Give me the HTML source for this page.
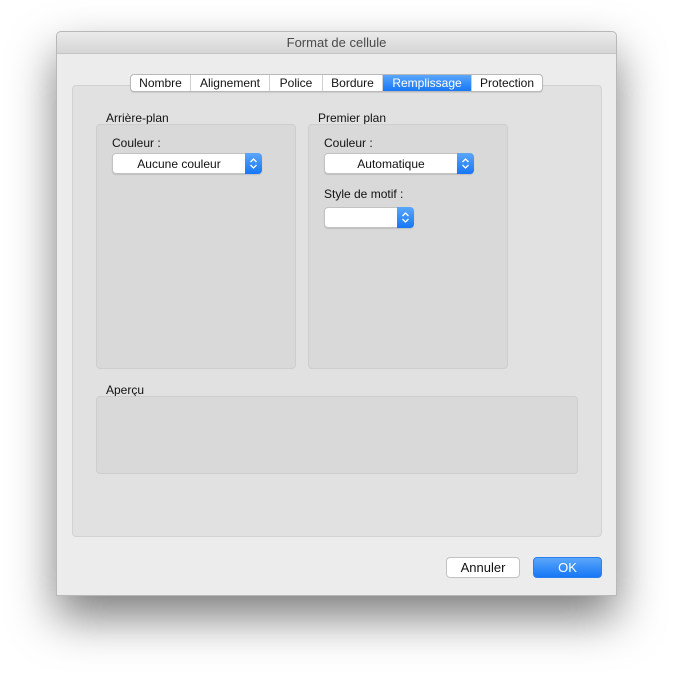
<!DOCTYPE html>
<html><head><style>
*{box-sizing:border-box;margin:0;padding:0}
body{width:673px;height:676px;background:#fff;font-family:"Liberation Sans",sans-serif;font-size:12px;color:#111;position:relative;overflow:hidden}
.abs{position:absolute}
.win{left:56px;top:31px;width:561px;height:565px;background:#ececec;border:1px solid #b8b8b8;border-radius:5px 5px 0 0;box-shadow:0 22px 45px rgba(0,0,0,.5)}
.title{left:0;top:0;width:559px;height:22px;background:linear-gradient(#ebebeb,#d6d6d6);border-bottom:1px solid #c4c4c4;text-align:center;line-height:22px;font-size:13px;color:#4a4a4a;border-radius:5px 5px 0 0}
.tabbox{left:15px;top:53px;width:530px;height:452px;background:#e1e1e1;border:1px solid #d2d2d2;border-radius:4px}
.tabs{left:73px;top:42px;height:18px;display:flex;border:1px solid #b8b8b8;border-radius:4px;background:#fff;overflow:hidden;box-shadow:0 1px 1px rgba(0,0,0,.1)}
.tabs div{height:16px;line-height:16px;text-align:center;border-right:1px solid #cfcfcf;font-size:12px}
.tabs div:last-child{border-right:none}
.tabs .sel{background:linear-gradient(#5aa6fb,#1777f5);color:#fff}
.grp{background:#d9d9d9;border:1px solid #cecece;border-radius:4px}
.lbl{font-size:12px}
.pop{height:21px;background:#fff;border:1px solid #c2c2c2;border-radius:4px;box-shadow:0 1px 1px rgba(0,0,0,.12);text-align:center;line-height:20px;padding-right:16px}
.arr{position:absolute;right:-1px;top:-1px;width:17px;height:21px;background:linear-gradient(#5aa6fb,#1777f5);border-radius:0 4px 4px 0}
.btn{height:21px;border-radius:4px;text-align:center;line-height:20px;font-size:13px}
</style></head><body>
<div class="abs win">
 <div class="abs title">Format de cellule</div>
 <div class="abs tabbox"></div>
 <div class="abs tabs">
  <div style="width:60px">Nombre</div><div style="width:79px">Alignement</div><div style="width:53px">Police</div><div style="width:60px">Bordure</div><div class="sel" style="width:89px">Remplissage</div><div style="width:70px">Protection</div>
 </div>
</div>
<div class="abs lbl" style="left:106px;top:111px">Arrière-plan</div>
<div class="abs grp" style="left:96px;top:124px;width:200px;height:245px"></div>
<div class="abs lbl" style="left:112px;top:136px">Couleur :</div>
<div class="abs pop" style="left:112px;top:153px;width:150px">Aucune couleur<div class="arr"><svg width="17" height="21"><path d="M5.5 9L8.5 6L11.5 9M5.5 12L8.5 15L11.5 12" fill="none" stroke="#fff" stroke-width="1.3"/></svg></div></div>
<div class="abs lbl" style="left:318px;top:111px">Premier plan</div>
<div class="abs grp" style="left:308px;top:124px;width:200px;height:245px"></div>
<div class="abs lbl" style="left:324px;top:136px">Couleur :</div>
<div class="abs pop" style="left:324px;top:153px;width:150px">Automatique<div class="arr"><svg width="17" height="21"><path d="M5.5 9L8.5 6L11.5 9M5.5 12L8.5 15L11.5 12" fill="none" stroke="#fff" stroke-width="1.3"/></svg></div></div>
<div class="abs lbl" style="left:324px;top:187px">Style de motif :</div>
<div class="abs pop" style="left:324px;top:207px;width:90px"><div class="arr"><svg width="17" height="21"><path d="M5.5 9L8.5 6L11.5 9M5.5 12L8.5 15L11.5 12" fill="none" stroke="#fff" stroke-width="1.3"/></svg></div></div>
<div class="abs lbl" style="left:106px;top:383px">Aperçu</div>
<div class="abs grp" style="left:96px;top:396px;width:482px;height:78px"></div>
<div class="abs btn" style="left:446px;top:557px;width:74px;background:#fff;border:1px solid #c2c2c2">Annuler</div>
<div class="abs btn" style="left:533px;top:557px;width:69px;background:linear-gradient(#5aa6fb,#1777f5);color:#fff;border:1px solid #2a7ff0">OK</div>
</body></html>
